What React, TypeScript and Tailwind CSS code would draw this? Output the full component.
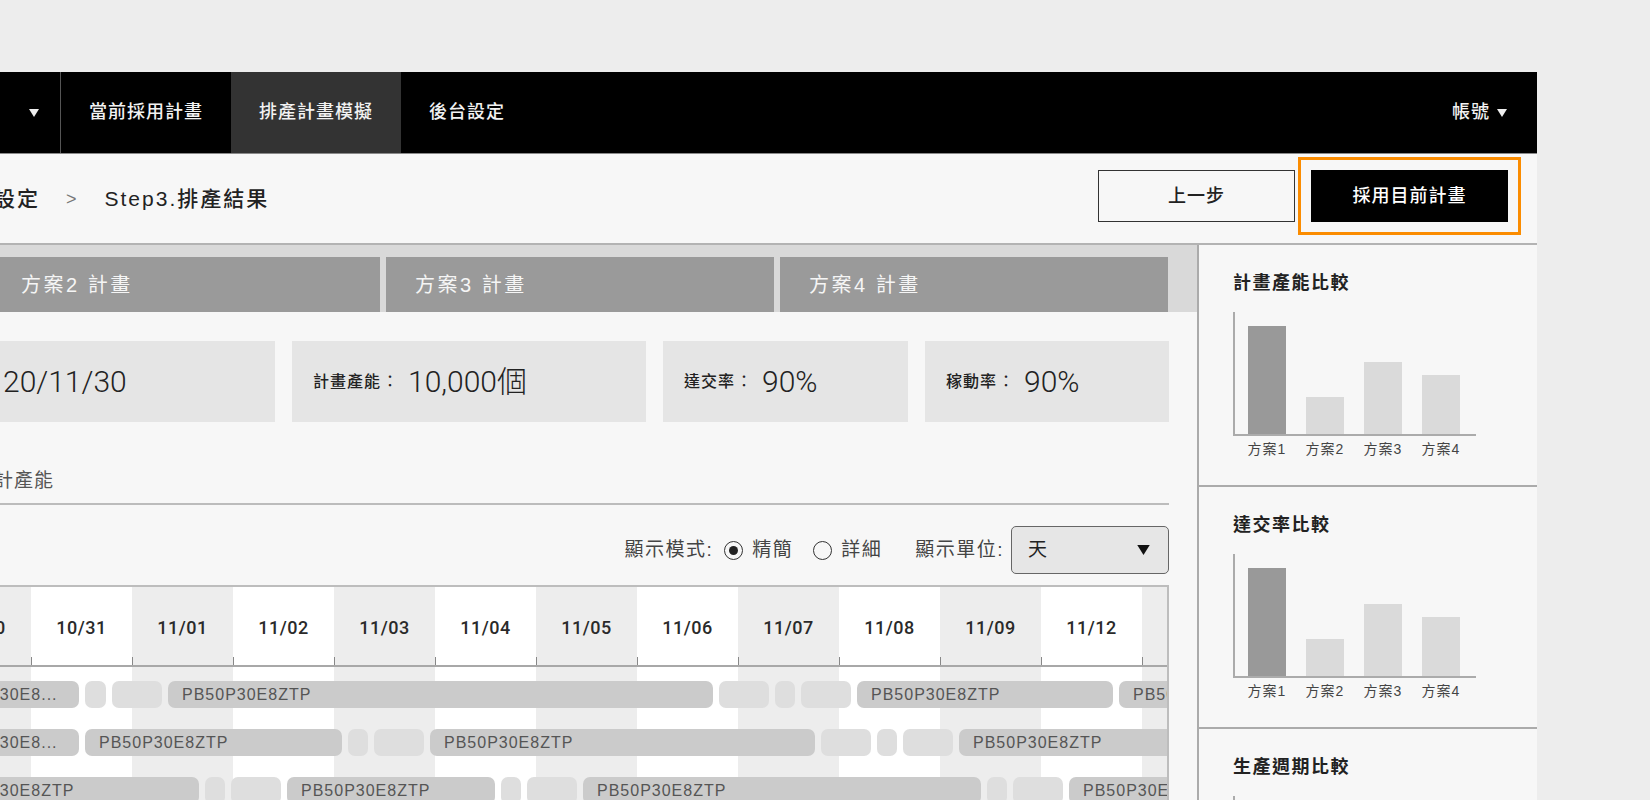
import React from 'react'

type Bar = { w: number; dark?: boolean; text?: string }

const dates = ['10/30', '10/31', '11/01', '11/02', '11/03', '11/04', '11/05', '11/06', '11/07', '11/08', '11/09', '11/12', '']

const rows: Bar[][] = [
  [
    { w: 148, dark: true, text: 'PB50P30E8...' },
    { w: 21 },
    { w: 50 },
    { w: 545, dark: true, text: 'PB50P30E8ZTP' },
    { w: 50 },
    { w: 20 },
    { w: 50 },
    { w: 256, dark: true, text: 'PB50P30E8ZTP' },
    { w: 200, dark: true, text: 'PB50P30E8ZTP' },
  ],
  [
    { w: 148, dark: true, text: 'PB50P30E8...' },
    { w: 257, dark: true, text: 'PB50P30E8ZTP' },
    { w: 20 },
    { w: 50 },
    { w: 385, dark: true, text: 'PB50P30E8ZTP' },
    { w: 50 },
    { w: 20 },
    { w: 50 },
    { w: 300, dark: true, text: 'PB50P30E8ZTP' },
  ],
  [
    { w: 268, dark: true, text: 'PB50P30E8ZTP' },
    { w: 20 },
    { w: 50 },
    { w: 208, dark: true, text: 'PB50P30E8ZTP' },
    { w: 20 },
    { w: 50 },
    { w: 398, dark: true, text: 'PB50P30E8ZTP' },
    { w: 20 },
    { w: 50 },
    { w: 200, dark: true, text: 'PB50P30E8ZTP' },
  ],
]

const chartBars = [108, 37, 72, 59]

function Tri({ className }: { className?: string }) {
  return (
    <svg viewBox="0 0 10 8" className={className}>
      <polygon points="0,0 10,0 5,8" fill="currentColor" />
    </svg>
  )
}

function Radio({ checked }: { checked?: boolean }) {
  return (
    <span className="w-[19px] h-[19px] rounded-full border-[1.5px] border-[#333] flex items-center justify-center">
      {checked && <span className="w-[9px] h-[9px] rounded-full bg-[#222]" />}
    </span>
  )
}

function ChartSection({ title }: { title: string }) {
  return (
    <div className="h-[242px] shrink-0 border-b-2 border-[#ababab] pl-[34px] pt-[27px]">
      <div className="text-[18px] leading-[22px] font-bold tracking-[1.5px] text-[#222]">{title}</div>
      <div className="mt-[18px] w-[243px] h-[124px] border-l-2 border-b-2 border-[#ababab] flex items-end gap-[20px] pl-[13px]">
        {chartBars.map((h, i) => (
          <div
            key={i}
            className={`w-[38px] ${i === 0 ? 'bg-[#999999]' : 'bg-[#dadada]'}`}
            style={{ height: h }}
          />
        ))}
      </div>
      <div className="flex gap-[20px] pl-[15px] mt-[5px]">
        {[1, 2, 3, 4].map((n) => (
          <div key={n} className="w-[38px] flex justify-center whitespace-nowrap text-[14px] leading-[16px] tracking-[1px] text-[#444]">
            方案{n}
          </div>
        ))}
      </div>
    </div>
  )
}

function StatCard({ label, value, className }: { label?: string; value: string; className: string }) {
  return (
    <div className={`h-[81px] bg-[#e5e5e5] flex items-center shrink-0 ${className}`}>
      {label && (
        <>
          <span className="text-[16px] font-medium tracking-[1px] text-[#222]">{label}</span>
          <span className="ml-[1px] mr-[10px] text-[16px] text-[#222]">：</span>
        </>
      )}
      <span className="text-[30px] font-light text-[#222] font-['Roboto','Noto_Sans_CJK_TC',sans-serif]">{value}</span>
    </div>
  )
}

export default function App() {
  return (
    <div className="w-[1650px] h-[800px] overflow-hidden bg-[#ededed] pt-[72px] font-['Liberation_Sans','Noto_Sans_CJK_TC',sans-serif]">
      <div className="w-[1537px] h-[728px] flex flex-col overflow-hidden">
        {/* top nav */}
        <div className="h-[82px] shrink-0 bg-black border-b border-[#8a8a8a] flex items-stretch text-[#f2f2f2] text-[18px] font-medium tracking-[1px]">
          <div className="w-[61px] border-r border-[#555] flex items-center justify-end pr-[21px]">
            <Tri className="w-[10px] h-[8px] text-[#eee]" />
          </div>
          <div className="px-[28px] flex items-center">當前採用計畫</div>
          <div className="px-[28px] flex items-center bg-[#333333]">排產計畫模擬</div>
          <div className="px-[28px] flex items-center">後台設定</div>
          <div className="ml-auto pr-[30px] flex items-center gap-[7px]">
            <span>帳號</span>
            <Tri className="w-[10px] h-[8px] text-[#eee]" />
          </div>
        </div>

        <div className="flex-1 bg-[#f7f7f7] flex flex-col min-h-0">
          {/* breadcrumb + actions */}
          <div className="h-[89px] shrink-0 flex items-center pb-[5px]">
            <div className="flex items-center mt-[6px] text-[21px] font-medium tracking-[2px] text-[#222] whitespace-nowrap">
              <span className="-ml-[6px]">設定</span>
              <span className="ml-[26px] text-[18px] text-[#777] tracking-normal">&gt;</span>
              <span className="ml-[28px]">Step3.排產結果</span>
            </div>
            <div className="ml-auto pr-[16px] flex items-center gap-[3px]">
              <button className="w-[197px] h-[52px] border border-[#333] bg-[#f7f7f7] text-[18px] font-medium tracking-[1px] text-[#222]">
                上一步
              </button>
              <div className="border-[3px] border-[#fb8c00] p-[10px]">
                <button className="w-[197px] h-[52px] bg-black text-[18px] font-medium tracking-[1px] text-white">
                  採用目前計畫
                </button>
              </div>
            </div>
          </div>
          <div className="h-[2px] shrink-0 bg-[#b3b3b3]" />

          <div className="flex flex-1 min-h-0">
            {/* left column */}
            <div className="w-[1197px] shrink-0 overflow-hidden flex flex-col">
              <div className="h-[67px] shrink-0 bg-[#d9d9d9] pt-[12px]">
                <div className="flex gap-[6px] -ml-[8px]">
                  {['方案2 計畫', '方案3 計畫', '方案4 計畫'].map((t) => (
                    <div key={t} className="w-[388px] h-[55px] shrink-0 bg-[#9a9a9a] pl-[29px] flex items-center text-[20px] tracking-[2.5px] text-[#f5f5f5]">
                      {t}
                    </div>
                  ))}
                </div>
              </div>

              <div className="pr-[28px] flex flex-col flex-1 min-h-0">
                <div className="mt-[29px] flex gap-[17px]">
                  <StatCard value="20/11/30" className="w-[300px] -ml-[25px] pl-[28px]" />
                  <StatCard label="計畫產能" value="10,000個" className="w-[354px] pl-[21px]" />
                  <StatCard label="達交率" value="90%" className="w-[245px] pl-[21px]" />
                  <StatCard label="稼動率" value="90%" className="w-[244px] pl-[21px]" />
                </div>

                <div className="mt-[45px] pb-[8px] border-b-2 border-[#bcbcbc]">
                  <div className="-ml-[26px] text-[19px] leading-[28px] tracking-[1px] text-[#555] whitespace-nowrap">預計產能</div>
                </div>

                <div className="mt-[21px] h-[48px] flex items-center justify-end text-[19px] tracking-[1.5px] text-[#444]">
                  <span>顯示模式:</span>
                  <span className="ml-[11px]"><Radio checked /></span>
                  <span className="ml-[9px]">精簡</span>
                  <span className="ml-[20px]"><Radio /></span>
                  <span className="ml-[9px]">詳細</span>
                  <span className="ml-[33px]">顯示單位:</span>
                  <div className="ml-[7px] w-[158px] h-[48px] rounded-[5px] border border-[#666] bg-[#e6e6e6] flex items-center pl-[16px] pr-[18px]">
                    <span className="text-[#222]">天</span>
                    <Tri className="ml-auto w-[13px] h-[10px] text-[#111]" />
                  </div>
                </div>

                {/* gantt */}
                <div className="mt-[11px] w-[1169px] flex-1 relative overflow-hidden border-t-2 border-r-2 border-[#bdbdbd]">
                  <div className="absolute top-0 bottom-0 left-[-70px] flex">
                    {dates.map((d, i) => (
                      <div key={i} className={`w-[101px] shrink-0 ${i % 2 === 0 ? 'bg-[#ededed]' : 'bg-white'}`} />
                    ))}
                  </div>
                  <div className="relative flex -ml-[70px] h-[80px] border-b-2 border-[#a8a8a8]">
                    {dates.map((d, i) => (
                      <div key={i} className="relative w-[101px] shrink-0 flex items-center justify-center pt-[2px] text-[18px] font-medium tracking-[0.5px] text-[#2a2a2a] font-['Roboto',sans-serif]">
                        {d}
                        <span className="absolute left-0 bottom-0 w-px h-[8px] bg-[#888]" />
                      </div>
                    ))}
                  </div>
                  <div className="relative pt-[14px] flex flex-col gap-[21px]">
                    {rows.map((row, ri) => (
                      <div key={ri} className="flex gap-[6px] -ml-[69px] h-[27px]">
                        {row.map((b, bi) => (
                          <div
                            key={bi}
                            className={`shrink-0 h-[27px] rounded-[7px] overflow-hidden whitespace-nowrap flex items-center pl-[14px] text-[16px] tracking-[1px] text-[#555] ${b.dark ? 'bg-[#cbcbcb]' : 'bg-[#dedede]'}`}
                            style={{ width: b.w }}
                          >
                            {b.text}
                          </div>
                        ))}
                      </div>
                    ))}
                  </div>
                </div>
              </div>
            </div>

            {/* right sidebar */}
            <div className="flex-1 border-l-2 border-[#ababab] flex flex-col overflow-hidden">
              <ChartSection title="計畫產能比較" />
              <ChartSection title="達交率比較" />
              <ChartSection title="生產週期比較" />
            </div>
          </div>
        </div>
      </div>
    </div>
  )
}
